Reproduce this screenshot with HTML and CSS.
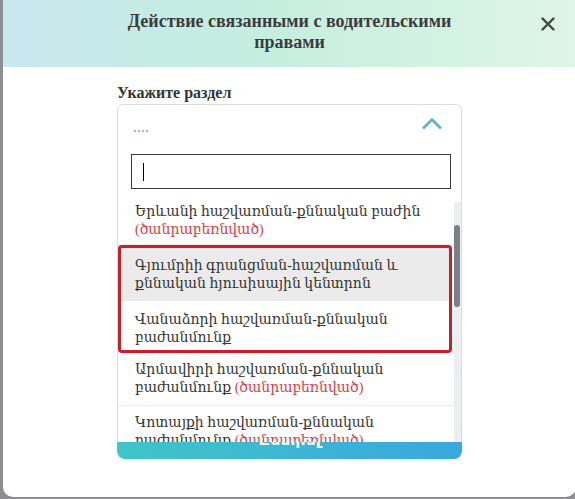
FILE: index.html
```html
<!DOCTYPE html>
<html>
<head>
    <title>Действие связанными с водительскими правами</title>
    <link rel="stylesheet" href="styles.css">
</head>
<body>
    <div class="modal">
        <div class="modal-head">
            <div></div>
            <h2 class="modal-title">Действие связанными с водительскими правами</h2>
            <button class="close" type="button">
                <svg width="14" height="14" viewBox="0 0 14 14">
                    <path d="M1.5 1.5 L12.5 12.5 M12.5 1.5 L1.5 12.5" stroke="#3e4844" stroke-width="2.4" stroke-linecap="round" fill="none"/>
                </svg>
            </button>
        </div>

        <div class="modal-body">
            <form class="form">
                <label class="label">Укажите раздел</label>
                <div class="select">
                    <div class="select-head">
                        <span class="placeholder">....</span>
                        <svg class="chevron" width="22" height="13" viewBox="0 0 22 13">
                            <path d="M2 11.5 L11 2.5 L20 11.5" stroke="#5cb1d0" stroke-width="2.6" fill="none"/>
                        </svg>
                    </div>
                    <div class="select-menu">
                        <div class="search"><span class="caret"></span></div>
                        <div class="options">
                            <div class="option-list">
                                <div class="option first">Երևանի հաշվառման-քննական բաժին <span class="busy">(ծանրաբեռնված)</span></div>
                                <div class="marked">
                                    <div class="option active">Գյումրիի գրանցման-հաշվառման և քննական հյուսիսային կենտրոն</div>
                                    <div class="option">Վանաձորի հաշվառման-քննական բաժանմունք</div>
                                </div>
                                <div class="option">Արմավիրի հաշվառման-քննական բաժանմունք <span class="busy">(ծանրաբեռնված)</span></div>
                                <div class="option">Կոտայքի հաշվառման-քննական բաժանմունք <span class="busy">(ծանրաբեռնված)</span></div>
                            </div>
                            <div class="scrollbar"><div class="thumb"></div></div>
                        </div>
                    </div>
                </div>
                <button class="submit" type="button">Ընտրել</button>
            </form>
        </div>
    </div>
</body>
</html>
```

FILE: styles.css
```css
body {
    margin: 0;
    background-color: #8d8d92;
    font-family: "Liberation Serif", "DejaVu Serif", serif;
    color: #333;
    overflow: hidden;
}

.modal {
    margin-left: 3px;
    width: 573px;
    height: 497px;
    background-color: #fff;
    border-radius: 0 0 10px 10px;
}

.modal-head {
    display: grid;
    grid-template-columns: 56px 1fr 56px;
    height: 67px;
    background: linear-gradient(90deg, #c8e8f0 0%, #c4eedf 45%, #dff5e5 100%);
}

.modal-title {
    margin: 0 auto;
    padding-top: 11px;
    max-width: 345px;
    font-size: 18px;
    line-height: 21px;
    font-weight: bold;
    text-align: center;
    color: #3c3c3c;
}

.close {
    align-self: start;
    justify-self: start;
    margin: 17px 0 0 21px;
    padding: 0;
    border: none;
    background: none;
    width: 14px;
    height: 14px;
    cursor: pointer;
}

.close svg {
    display: block;
}

.modal-body {
    padding-top: 17px;
}

.form {
    width: 345px;
    margin: 0 auto;
}

.label {
    display: block;
    margin-bottom: 2px;
    font-size: 16px;
    line-height: 18px;
    font-weight: bold;
    color: #333;
}

.select {
    position: relative;
}

.select-head {
    display: flex;
    align-items: center;
    justify-content: space-between;
    box-sizing: border-box;
    height: 44px;
    padding: 0 18px 0 15px;
    border: 1px solid #dcdcdc;
    border-bottom: none;
    border-radius: 6px 6px 0 0;
}

.placeholder {
    font-size: 16px;
    color: #9a9a9a;
    margin-top: 1px;
}

.chevron {
    margin-top: -6px;
}

.select-menu {
    position: absolute;
    top: 44px;
    left: 0;
    right: 0;
    box-sizing: border-box;
    height: 294px;
    padding-top: 6px;
    background-color: #fff;
    border-left: 1px solid #dcdcdc;
    border-right: 1px solid #dcdcdc;
    z-index: 2;
}

.search {
    display: flex;
    align-items: center;
    box-sizing: border-box;
    height: 35px;
    margin: 0 10px 0 13px;
    padding-left: 11px;
    border: 1.5px solid #3a3a3a;
}

.caret {
    width: 1px;
    height: 18px;
    background-color: #000;
}

.options {
    display: flex;
    height: 240px;
    margin-top: 13px;
}

.option-list {
    flex: 1;
    overflow: hidden;
}

.option {
    padding: 8px 17px;
    border-bottom: 1px solid #ececec;
    font-size: 14px;
    line-height: 18px;
    color: #333;
}

.option.first {
    margin-top: -7px;
    padding-bottom: 5px;
}

.option.active {
    padding: 12px 17px 8px;
    background-color: #ebebeb;
    border-bottom: none;
}

.busy {
    color: #dd3a3f;
}

.marked {
    margin-right: 2px;
    outline: 3px solid #c8202a;
    outline-offset: -3px;
    border-radius: 4px;
}

.marked .option:last-child {
    padding: 10px 17px 6px;
    border-bottom: none;
}

.scrollbar {
    width: 7px;
    background-color: #eceef1;
}

.thumb {
    width: 6px;
    height: 82px;
    margin-top: 23px;
    border-radius: 4px;
    background-color: #7c7f85;
}

.submit {
    display: block;
    width: 100%;
    height: 40px;
    margin-top: 271px;
    border: none;
    border-radius: 8px;
    background: linear-gradient(90deg, #3fc6c7 0%, #3aa7dd 100%);
    color: #fff;
    font-family: "DejaVu Sans", sans-serif;
    font-size: 16px;
    font-weight: bold;
    cursor: pointer;
}
```
